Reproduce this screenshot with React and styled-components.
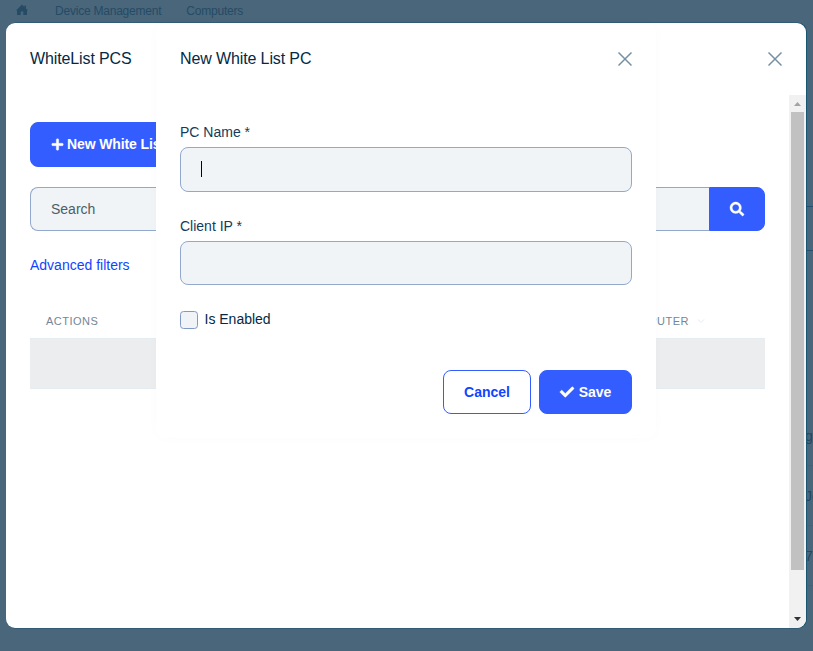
import React from "react";
import styled, { createGlobalStyle, css } from "styled-components";
import { FaPlus, FaSearch, FaCheck } from "react-icons/fa";

const Global = createGlobalStyle`
  * { box-sizing: border-box; }
  body {
    margin: 0;
    overflow: hidden;
    background: #4a667b;
    color: #133b5c;
    font-family: "Liberation Sans", Arial, sans-serif;
    font-size: 14px;
  }
`;

const Screen = styled.div`
  position: relative;
  width: 813px;
  height: 651px;
  overflow: hidden;
  background: #4a667b;
`;

const Breadcrumb = styled.nav`
  display: flex;
  align-items: center;
  height: 22px;
  padding-left: 16px;
  font-size: 12px;
  letter-spacing: -0.22px;
  color: #254b65;
`;

const Crumb = styled.span`
  margin-left: ${(p) => p.$gap}px;
  line-height: 22px;
`;

const HomeIcon = styled.svg`
  width: 12px;
  height: 12px;
  flex: none;
  margin-top: -2px;
`;

const PageEdge = styled.div`
  display: flex;
  flex-direction: column;
  align-items: flex-end;
  padding-top: 184px;
`;

const EdgeField = styled.div`
  width: 7px;
  height: 45px;
  margin-bottom: 155px;
  border: solid #254f70;
  border-width: 1px 0;
`;

const EdgeCell = styled.div`
  width: 8px;
  height: 60px;
  border-bottom: 1px solid #456176;
  line-height: 60px;
  font-size: 14px;
  white-space: nowrap;
  color: #1f4964;
`;

const Panel = styled.section`
  position: absolute;
  top: 23px;
  left: ${(p) => p.$left}px;
  width: ${(p) => p.$width}px;
  height: ${(p) => p.$height}px;
  display: flex;
  flex-direction: column;
  overflow: hidden;
  border-radius: 9px;
  background: #fff;
  box-shadow: ${(p) => (p.$front ? "0 0 12px rgba(20,60,80,.02)" : "0.5px 0 0 0.5px #1b5372")};
`;

const PanelHeader = styled.header`
  display: flex;
  align-items: center;
  justify-content: space-between;
  flex: none;
  height: 72px;
  padding: 0 24px;
`;

const Title = styled.h2`
  margin: 0;
  padding-bottom: 1px;
  font-size: 16px;
  font-weight: 400;
  line-height: 19px;
  letter-spacing: -0.12px;
  color: #052944;
`;

const CloseButton = styled.button`
  display: flex;
  padding: 0;
  border: 0;
  background: none;
  color: #7690a3;
`;

const PanelBody = styled.div`
  display: flex;
  flex: 1;
  min-height: 0;
`;

const ListContent = styled.div`
  flex: 1;
  padding: 27px 24px 0;
`;

const Button = styled.button`
  display: inline-flex;
  align-items: center;
  justify-content: ${(p) => (p.$start ? "flex-start" : "center")};
  gap: ${(p) => (p.$start ? 3 : 5)}px;
  width: ${(p) => p.$width}px;
  height: ${(p) => p.$height || 44}px;
  padding: 0 0 1px ${(p) => (p.$start ? 20 : 0)}px;
  border: 1px solid #345dff;
  border-radius: 8px;
  background: #345dff;
  color: #fff;
  font: 700 14px "Liberation Sans", Arial, sans-serif;
  letter-spacing: ${(p) => (p.$start ? "-0.12px" : "normal")};
  white-space: nowrap;
  svg {
    flex: none;
    stroke: currentColor;
    stroke-width: 14px;
    overflow: visible;
  }
  ${(p) =>
    p.$outline &&
    css`
      background: #fff;
      color: #1244ff;
      box-shadow: 0 0 8px rgba(30, 50, 80, 0.015);
    `}
  ${(p) =>
    p.$joined &&
    css`
      border-radius: 0 8px 8px 0;
    `}
`;

const SearchRow = styled.div`
  display: flex;
  margin-top: 20px;
`;

const Input = styled.input`
  display: block;
  flex: 1;
  min-width: 0;
  width: 100%;
  height: 44px;
  padding: 0 20px;
  border: 1px solid #93a8cd;
  border-radius: ${(p) => (p.$joined ? "8px 0 0 8px" : "8px")};
  border-right-width: ${(p) => (p.$joined ? 0 : 1)}px;
  outline: none;
  background: #f0f4f7;
  color: #052944;
  font: 14px "Liberation Sans", Arial, sans-serif;
  &::placeholder { color: #4c5e68; opacity: 1; }
`;

const FilterLink = styled.a`
  display: block;
  margin-top: 24px;
  line-height: 20px;
  color: #1244ff;
`;

const TableHead = styled.div`
  display: flex;
  align-items: center;
  justify-content: space-between;
  height: 34px;
  margin-top: 29px;
  padding: 0 60px 0 16px;
  font-size: 11px;
  letter-spacing: 0.5px;
  color: #738697;
`;

const HeadCell = styled.span`
  display: flex;
  align-items: center;
  gap: 8px;
`;

const EmptyRow = styled.div`
  height: 51px;
  border: solid #e4ebf1;
  border-width: 1px 0;
  background: #ecedef;
`;

const Scrollbar = styled.div`
  display: flex;
  flex-direction: column;
  align-items: center;
  width: 17px;
  background: #f1f1f1;
`;

const ScrollArrow = styled.svg`
  display: block;
  width: 17px;
  height: 17px;
  flex: none;
`;

const ScrollThumb = styled.div`
  width: 13px;
  height: 458px;
  margin-bottom: 41px;
  background: #c1c1c1;
`;

const Form = styled.form`
  display: flex;
  flex-direction: column;
  flex: 1;
  padding: 27px 24px 0;
`;

const Field = styled.div`
  height: ${(p) => p.$height}px;
`;

const Label = styled.label`
  display: block;
  height: 25px;
  line-height: 20px;
`;

const InputFrame = styled.div`
  display: flex;
  align-items: center;
  width: 100%;
  height: 45px;
  padding-left: 20px;
  border: 1px solid #93a8cd;
  border-radius: 8px;
  background: #f0f4f7;
`;

const Caret = styled.span`
  width: 1px;
  height: 16px;
  margin-top: -1px;
  background: #000030;
`;

const CheckLabel = styled.label`
  display: flex;
  align-items: center;
  gap: 6.5px;
  height: 18px;
  color: #052944;
`;

const CheckText = styled.span`
  line-height: 16px;
  padding-bottom: 2px;
`;

const Checkbox = styled.span`
  width: 18px;
  height: 18px;
  border: 1px solid #7f9ac7;
  border-radius: 3.5px;
  background: #f0f4f7;
`;

const Footer = styled.footer`
  display: flex;
  justify-content: flex-end;
  gap: 8px;
  margin-top: 41px;
`;

function Close() {
  return (
    <CloseButton type="button" aria-label="Close">
      <svg width="14" height="14" viewBox="0 0 14 14" fill="none" stroke="currentColor" strokeWidth="1.5">
        <path d="M.5.5l13 13M13.5.5l-13 13" />
      </svg>
    </CloseButton>
  );
}

export default function App() {
  return (
    <>
      <Global />
      <Screen>
        <Breadcrumb>
          <HomeIcon viewBox="0 0 12 12" fill="currentColor">
            <path d="M6 .5 8.5 3V1.5H10V4.5L12 6.5H11V11H7.3V7.5H4.7V11H1V6.5H0z" />
          </HomeIcon>
          <Crumb $gap={27}>Device Management</Crumb>
          <Crumb $gap={25}>Computers</Crumb>
        </Breadcrumb>
        <PageEdge>
          <EdgeField />
          <EdgeCell>g.</EdgeCell>
          <EdgeCell>Je</EdgeCell>
          <EdgeCell>7</EdgeCell>
        </PageEdge>

        <Panel $left={6} $width={800} $height={605}>
          <PanelHeader>
            <Title>WhiteList PCS</Title>
            <Close />
          </PanelHeader>
          <PanelBody>
            <ListContent>
              <Button $start $width={182} $height={45}>
                <FaPlus size={13} />
                New White List PC
              </Button>
              <SearchRow>
                <Input $joined placeholder="Search" aria-label="Search" />
                <Button $width={56} $joined aria-label="Submit search">
                  <FaSearch size={14} />
                </Button>
              </SearchRow>
              <FilterLink>Advanced filters</FilterLink>
              <TableHead>
                <HeadCell>ACTIONS</HeadCell>
                <HeadCell>
                  COMPUTER
                  <svg width="8" height="6" viewBox="0 0 8 6" fill="none" stroke="#e6eaed">
                    <path d="M1 1.5 4 4.5 7 1.5" />
                  </svg>
                </HeadCell>
              </TableHead>
              <EmptyRow />
            </ListContent>
            <Scrollbar>
              <ScrollArrow viewBox="0 0 17 17" fill="#a3a3a3">
                <path d="M5 11 8.5 7 12 11z" />
              </ScrollArrow>
              <ScrollThumb />
              <ScrollArrow viewBox="0 0 17 17" fill="#303038">
                <path d="M5 6 12 6 8.5 10z" />
              </ScrollArrow>
            </Scrollbar>
          </PanelBody>
        </Panel>

        <Panel $front $left={156} $width={500} $height={415}>
          <PanelHeader>
            <Title>New White List PC</Title>
            <Close />
          </PanelHeader>
          <Form>
            <Field $height={94}>
              <Label>PC Name *</Label>
              <InputFrame>
                <Caret />
              </InputFrame>
            </Field>
            <Field $height={95}>
              <Label>Client IP *</Label>
              <Input aria-label="Client IP" />
            </Field>
            <CheckLabel>
              <Checkbox />
              <CheckText>Is Enabled</CheckText>
            </CheckLabel>
            <Footer>
              <Button type="button" $outline $width={88}>Cancel</Button>
              <Button type="button" $width={93}>
                <FaCheck size={14} />
                Save
              </Button>
            </Footer>
          </Form>
        </Panel>
      </Screen>
    </>
  );
}
